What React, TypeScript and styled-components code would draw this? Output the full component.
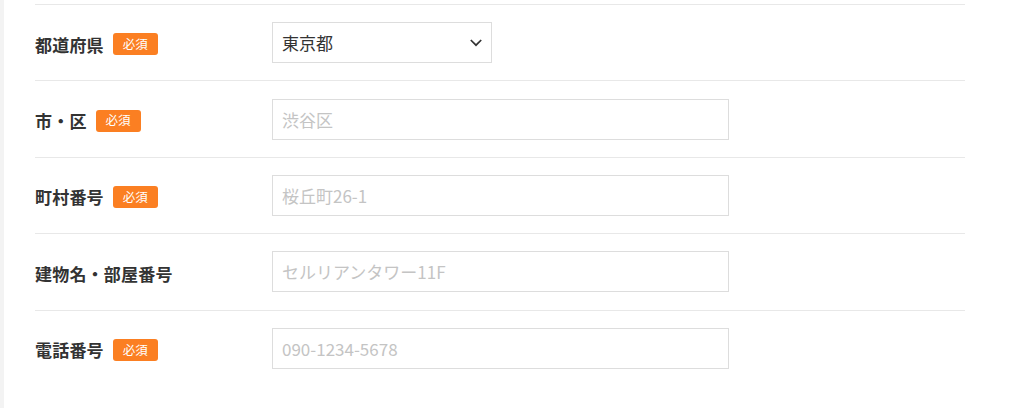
import React from "react";
import styled, { createGlobalStyle } from "styled-components";

const GlobalStyle = createGlobalStyle`
  html, body {
    margin: 0;
    padding: 0;
    background: #f3f3f3;
    font-family: "Noto Sans CJK JP", "Noto Sans", sans-serif;
  }
`;

const Page = styled.div`
  height: 408px;
  overflow: hidden;
  padding-left: 4px;
`;

const Card = styled.div`
  background: #ffffff;
  height: 408px;
  padding: 4px 0 0 31px;
  box-sizing: border-box;
`;

const Rows = styled.div`
  width: 930px;
`;

const Row = styled.div`
  display: flex;
  align-items: center;
  height: 75.4px;
  border-top: 1.2px solid #e8e8e8;
  box-sizing: content-box;
`;

const LabelCell = styled.div`
  width: 237px;
  flex-shrink: 0;
  display: flex;
  align-items: center;
  gap: 9px;
  padding-top: 3px;
`;

const Label = styled.span`
  font-size: 17px;
  font-weight: 700;
  color: #333333;
  letter-spacing: 0.2px;
`;

const Badge = styled.span`
  display: inline-flex;
  align-items: center;
  justify-content: center;
  height: 22px;
  padding: 0 10px;
  border-radius: 3px;
  background: #fb7f22;
  color: #ffffff;
  font-size: 12.5px;
  line-height: 1;
`;

const Field = styled.input<{ $w?: number }>`
  width: ${(p) => p.$w ?? 457}px;
  height: 41px;
  box-sizing: border-box;
  border: 1px solid #dddddd;
  border-radius: 0;
  padding: 0 9px;
  font-family: inherit;
  font-size: 17px;
  color: #333333;
  outline: none;
  &::placeholder {
    color: #c4c4c4;
  }
`;

const SelectWrap = styled.div`
  position: relative;
  width: 220px;
  height: 41px;
`;

const Select = styled.select`
  width: 100%;
  height: 100%;
  box-sizing: border-box;
  appearance: none;
  border: 1px solid #dddddd;
  border-radius: 0;
  background: #ffffff;
  padding: 0 9px;
  font-family: inherit;
  font-size: 17px;
  color: #333333;
  outline: none;
`;

const Chevron = styled.svg`
  position: absolute;
  right: 10px;
  top: 17px;
  pointer-events: none;
`;

type Item = {
  label: string;
  required: boolean;
  placeholder?: string;
};

const items: Item[] = [
  { label: "市・区", required: true, placeholder: "渋谷区" },
  { label: "町村番号", required: true, placeholder: "桜丘町26-1" },
  { label: "建物名・部屋番号", required: false, placeholder: "セルリアンタワー11F" },
  { label: "電話番号", required: true, placeholder: "090-1234-5678" },
];

function LabelBlock({ label, required }: { label: string; required: boolean }) {
  return (
    <LabelCell>
      <Label>{label}</Label>
      {required && <Badge>必須</Badge>}
    </LabelCell>
  );
}

export default function App() {
  return (
    <Page>
      <GlobalStyle />
      <Card>
        <Rows>
          <Row>
            <LabelBlock label="都道府県" required />
            <SelectWrap>
              <Select defaultValue="東京都">
                <option>北海道</option>
                <option>東京都</option>
                <option>大阪府</option>
              </Select>
              <Chevron width="12" height="8" viewBox="0 0 12 8">
                <path d="M0.8 1 L6 6.2 L11.2 1" fill="none" stroke="#333" strokeWidth="1.7" />
              </Chevron>
            </SelectWrap>
          </Row>
          {items.map((it) => (
            <Row key={it.label}>
              <LabelBlock label={it.label} required={it.required} />
              <Field placeholder={it.placeholder} />
            </Row>
          ))}
        </Rows>
      </Card>
    </Page>
  );
}
